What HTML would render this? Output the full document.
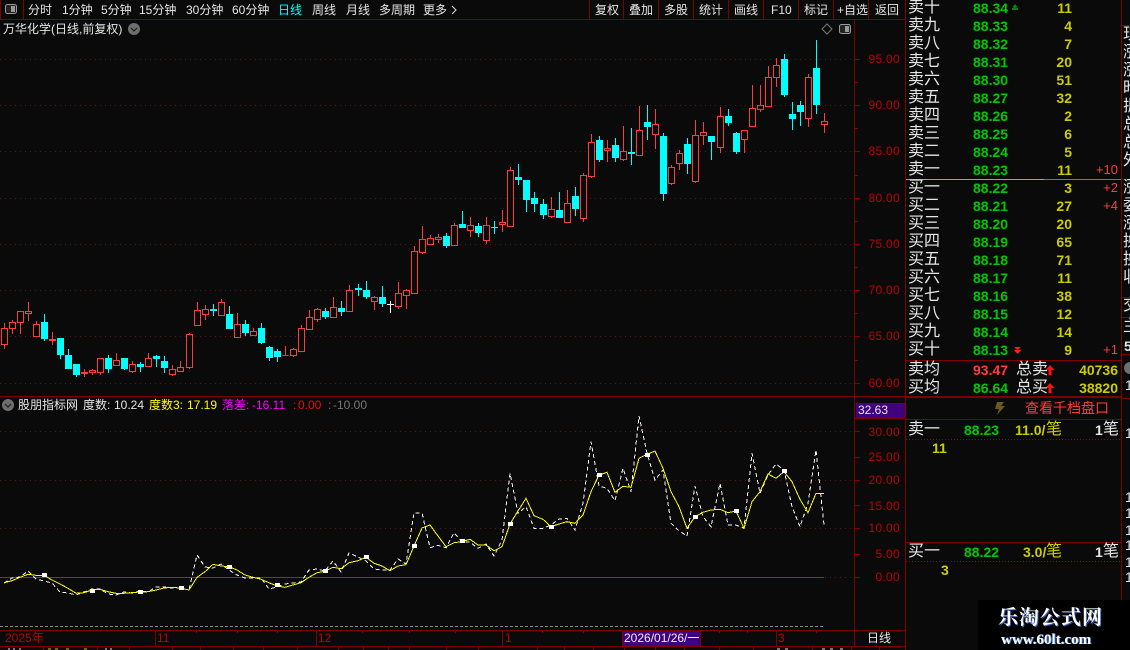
<!DOCTYPE html>
<html lang="zh"><head><meta charset="utf-8"><title>万华化学</title>
<style>
html,body{margin:0;padding:0;background:#0a0a0a}
#p{position:relative;width:1130px;height:650px;overflow:hidden;background:#0a0a0a;font:12px/16px "WenQuanYi Zen Hei","Liberation Sans","Noto Sans CJK SC",sans-serif;color:#e6e6e6}
svg{position:absolute;left:0;top:0}
#p span{position:absolute;white-space:nowrap}
.n{font-family:"Liberation Sans","WenQuanYi Zen Hei",sans-serif}
.l{font-size:16px;color:#e6e6e6;left:908px}
.g{color:#00c800;font:bold 14px/16px "Liberation Sans",sans-serif;left:973px}
.y{color:#cccc00;font:bold 14px/16px "Liberation Sans",sans-serif}
.q{color:#cccc00;font:bold 14px/16px "Liberation Sans",sans-serif;right:58px}
.r{color:#ff3c3c;font:13px/16px "Liberation Sans",sans-serif;right:12px}
.a{color:#c00000;font:12px/16px "Liberation Sans",sans-serif;right:230px;letter-spacing:.3px}
.t{color:#c00000;font:12px/16px "Liberation Sans","WenQuanYi Zen Hei",sans-serif;top:630px}
.e{left:1123px;font-size:16px}
.o{left:1125px;font:14px/16px "Liberation Sans",sans-serif;color:#e6e6e6}
</style></head><body><div id="p">
<svg width="1130" height="650" viewBox="0 0 1130 650">
<g fill="none" stroke="#5a1212" stroke-dasharray="1 4">
<path d="M0 59.5H854M0 105.5H854M0 151.5H854M0 198.5H854M0 244.5H854M0 290.5H854M0 336.5H854M0 383.5H854M0 431.5H854M0 480.5H854M0 528.5H854M825 577.5H854"/>
</g>
<g shape-rendering="crispEdges" stroke="#800000" fill="none">
<path d="M0 19.5H905M23.5 0V19M589.5 0V19M623.5 0V19M658.5 0V19M693.5 0V19M728.5 0V19M763.5 0V19M798.5 0V19M833.5 0V19M868.5 0V19M0.5 0V19"/>
<path d="M854.5 19V646M905.5 0V650M1121.5 0V600M0 396.5H1121M0 630.5H905M0 646.5H905M855 418.5H905M906 360.5H1121M906 397.5H1121M906 419.5H1121M906 542.5H1121M1122 25.5H1130M1122 179.5H1130M1122 297.5H1130M1122 317.5H1130M1122 354.5H1130M1122 398.5H1130"/>
<path d="M855 59.5h5M855 105.5h5M855 151.5h5M855 198.5h5M855 244.5h5M855 290.5h5M855 336.5h5M855 383.5h5M855 82.5h3M855 128.5h3M855 175.5h3M855 221.5h3M855 267.5h3M855 313.5h3M855 360.5h3M855 431.5h5M855 457.5h5M855 480.5h5M855 505.5h5M855 528.5h5M855 554.5h5M855 577.5h5"/>
<path d="M155.5 630V646M316.5 630V646M502.5 630V646M776.5 630V646M196.5 631v2M237.5 631v2M277.5 631v2M362.5 631v2M409.5 631v2M455.5 631v2M542.5 631v2M583.5 631v2M662.5 631v2M719.5 631v2M747.5 631v2M816.5 631v2M43.5 647v3M97.5 647v3M129.5 647v3M172.5 647v3M200.5 647v3M233.5 647v3M263.5 647v3M297.5 647v3M338.5 647v3M363.5 647v3M388.5 647v3M409.5 647v3M446.5 647v3M478.5 647v3M537.5 647v3M564.5 647v3M593.5 647v3M624.5 647v3M655.5 647v3M684.5 647v3M719.5 647v3M753.5 647v3M812.5 647v3M851.5 647v3M879.5 647v3"/>
</g>
<path shape-rendering="crispEdges" stroke="#e6e6e6" d="M8 649h2M13 649h2M19 649h2M105 649h2M110 649h2M777 649h3M785 649h3M822 649h3M830 649h3M840 649h3" fill="none"/>
<path shape-rendering="crispEdges" stroke="#cccc00" d="M48 649h3M55 649h3M66 649h3M84 649h3" fill="none"/>
<g shape-rendering="crispEdges">
<path fill="none" stroke="#ff3c3c" d="M4.5 323V349M12.5 320V334M20.5 311V334M28.5 302V321M36.5 321V337M52.5 332V345M84.5 369V377M92.5 369V375M100.5 358V375M116.5 353V366M132.5 361V373M148.5 353V366M172.5 365V376M180.5 361V372M189.5 333V369M197.5 302V326M205.5 305V320M221.5 299V315M237.5 313V337M253.5 328V336M285.5 346V356M293.5 348V357M301.5 325V352M309.5 310V329M317.5 308V322M333.5 297V317M349.5 285V311M374.5 296V310M398.5 282V309M406.5 289V309M414.5 246V293M422.5 226V254M430.5 235V244M438.5 234V243M454.5 223V245M470.5 217V237M486.5 217V244M502.5 210V232M510.5 167V226M551.5 197V218M567.5 190V222M583.5 173V222M591.5 134V178M607.5 140V162M623.5 126V161M639.5 106V155M655.5 109V149M671.5 165V185M679.5 150V170M695.5 120V183M703.5 122V145M720.5 107V153M744.5 130V153M752.5 85V126M760.5 85V112M768.5 66V106M776.5 58V87M808.5 74V127M824.5 113V133"/>
<path fill="#0a0a0a" stroke="#ff3c3c" d="M1.5 328.5h6v16h-6zM9.5 322.5h6v6h-6zM17.5 311.5h6v11h-6zM25.5 311.5h6v2h-6zM33.5 324.5h6v12h-6zM49.5 339.5h6v1h-6zM81.5 372.5h6v1h-6zM89.5 370.5h6v2h-6zM97.5 358.5h6v14h-6zM113.5 360.5h6v5h-6zM129.5 364.5h6v7h-6zM145.5 358.5h6v8h-6zM169.5 369.5h6v5h-6zM177.5 367.5h6v4h-6zM186.5 334.5h6v33h-6zM194.5 310.5h6v15h-6zM202.5 309.5h6v5h-6zM218.5 302.5h6v13h-6zM234.5 324.5h6v13h-6zM250.5 331.5h6v4h-6zM282.5 355.5h6M290.5 349.5h6v6h-6zM298.5 328.5h6v23h-6zM306.5 317.5h6v12h-6zM314.5 309.5h6v10h-6zM330.5 307.5h6v10h-6zM346.5 290.5h6v21h-6zM371.5 297.5h6v4h-6zM395.5 293.5h6v13h-6zM403.5 290.5h6v5h-6zM411.5 251.5h6v42h-6zM419.5 239.5h6v13h-6zM427.5 238.5h6v6h-6zM435.5 237.5h6v2h-6zM451.5 225.5h6v20h-6zM467.5 225.5h6v5h-6zM483.5 225.5h6v15h-6zM499.5 222.5h6v2h-6zM507.5 170.5h6v56h-6zM548.5 209.5h6v7h-6zM564.5 203.5h6v19h-6zM580.5 175.5h6v43h-6zM588.5 142.5h6v34h-6zM604.5 148.5h6v2h-6zM620.5 151.5h6v8h-6zM636.5 130.5h6v25h-6zM652.5 124.5h6v10h-6zM668.5 167.5h6v16h-6zM676.5 153.5h6v10h-6zM692.5 135.5h6v46h-6zM700.5 132.5h6v3h-6zM717.5 116.5h6v31h-6zM741.5 130.5h6v9h-6zM749.5 108.5h6v18h-6zM757.5 105.5h6v4h-6zM765.5 77.5h6v29h-6zM773.5 65.5h6v12h-6zM805.5 77.5h6v41h-6zM821.5 121.5h6v3h-6z"/>
<path fill="none" stroke="#00ffff" d="M44.5 314V341M60.5 338V359M68.5 349V369M76.5 364V377M108.5 355V373M124.5 358V370M140.5 362V372M156.5 355V367M164.5 356V373M213.5 304V316M229.5 306V329M245.5 320V336M261.5 323V344M269.5 346V361M277.5 349V362M325.5 308V319M341.5 301V316M358.5 284V296M366.5 281V299M382.5 286V307M446.5 233V248M462.5 211V228M478.5 223V237M494.5 221V234M518.5 164V185M526.5 180V212M534.5 192V212M543.5 199V219M559.5 192V218M575.5 187V216M599.5 136V162M615.5 138V162M631.5 128V165M647.5 105V140M663.5 133V201M687.5 138V174M711.5 136V160M728.5 109V126M736.5 132V154M784.5 54V97M792.5 102V130M800.5 101V126M816.5 40V114"/>
<path fill="#00ffff" d="M41 322h7v17h-7zM57 338h7v17h-7zM65 355h7v14h-7zM73 364h7v11h-7zM105 358h7v11h-7zM121 358h7v11h-7zM137 364h7v3h-7zM153 356h7v3h-7zM161 361h7v7h-7zM210 309h7v2h-7zM226 314h7v15h-7zM242 324h7v9h-7zM258 328h7v15h-7zM266 347h7v11h-7zM274 351h7v6h-7zM322 311h7v6h-7zM338 308h7v4h-7zM355 288h7v2h-7zM363 290h7v7h-7zM379 297h7v7h-7zM443 236h7v10h-7zM459 224h7v4h-7zM475 226h7v7h-7zM491 227h7v1h-7zM515 177h7v3h-7zM523 180h7v20h-7zM531 198h7v6h-7zM540 204h7v11h-7zM556 210h7v8h-7zM572 196h7v13h-7zM596 140h7v20h-7zM612 145h7v13h-7zM628 152h7v2h-7zM644 122h7v5h-7zM660 136h7v58h-7zM684 144h7v20h-7zM708 136h7v6h-7zM725 116h7v7h-7zM733 133h7v19h-7zM781 59h7v36h-7zM789 114h7v5h-7zM797 105h7v7h-7zM813 68h7v37h-7z"/>
<path fill="none" stroke="#fff" d="M390.5 301V313M387 304.5h7"/>
<path fill="none" stroke="#c81414" d="M0 577.5H824"/>
<path fill="none" stroke="#888" stroke-dasharray="3 2" d="M0 626.5H824"/>
<polyline fill="none" stroke="#fff" stroke-dasharray="4 3" points="4,583 12,578 20,577 28,571 36,579 44,581 52,583 60,592 68,593 76,595 84,592 92,589 100,589 108,594 116,595 124,592 132,593 140,591 148,592 156,587 164,587 172,588 180,588 189,590 197,555 205,567 213,568 221,564 229,570 237,575 245,578 253,578 261,578 269,589 277,587 285,584 293,583 301,582 309,570 317,569 325,571 333,561 341,572 349,553 358,557 366,561 374,569 382,570 390,570 398,559 406,564 414,513 422,513 430,547.7 438,545.3 446,547.7 454,532.7 462,541.7 470,542.3 478,548.3 486,544 494,556 502,540 510,473.3 518,513.3 526,506.7 534,528.3 543,528.3 551,525 559,519 567,518.3 575,530 583,503.3 591,441.7 599,486 607,488.3 615,500.7 623,468.3 631,491.7 639,416 647,453.3 655,480 663,470 671,523.3 679,530.7 687,536 695,486 703,516.7 711,526.7 720,483.3 728,525 736,525 744,528.3 752,453.3 760,493.3 768,475 776,464 784,470 792,506.7 800,526.7 808,503.3 816,450 824,525"/>
<polyline fill="none" stroke="#ffff00" points="4,582.7 12,580.7 20,577.3 28,574.3 36,575.3 44,575.3 52,580 60,584 68,588.3 76,593.3 84,592.7 92,590 100,589.3 108,591.7 116,593.3 124,593.3 132,592.7 140,592 148,591.7 156,590 164,588 172,587.3 180,588 189,590 197,577.3 205,571.7 213,564.3 221,566 229,566.7 237,570 245,575 253,577.3 261,579.3 269,582.7 277,586 285,587.3 293,585 301,582.7 309,577.3 317,572.7 325,571.3 333,567.3 341,568.7 349,562.7 358,560.7 366,557.3 374,563.3 382,566 390,570.7 398,566 406,564.7 414,546 422,528 430,525 438,536 446,546.7 454,542.7 462,541.7 470,539.3 478,545 486,545 494,550.7 502,546.7 510,524 518,511 526,498.3 534,515.7 543,519.3 551,526.7 559,524 567,521.7 575,523.3 583,515 591,491.7 599,475 607,472.3 615,492.3 623,486.3 631,487.3 639,458.3 647,454.3 655,451 663,468.3 671,491.7 679,506.7 687,528.3 695,516.7 703,512.3 711,510 720,509.3 728,512.7 736,511 744,528.3 752,501.7 760,491.7 768,474 776,478.3 784,471.7 792,481.7 800,499.3 808,512.7 816,493.3 824,493.7"/>
<path fill="#fff" d="M42 573h5v4h-5zM90 589h5v4h-5zM138 590h5v4h-5zM179 586h5v4h-5zM227 565h5v4h-5zM275 583h5v4h-5zM323 569h5v4h-5zM364 555h5v4h-5zM412 544h5v4h-5zM460 539h5v4h-5zM508 522h5v4h-5zM549 525h5v4h-5zM597 473h5v4h-5zM645 453h5v4h-5zM693 515h5v4h-5zM734 509h5v4h-5zM782 469h5v4h-5z"/>
<path fill="#400080" d="M856 403h49v15h-49zM623 631h77v15h-77z"/>
<path fill="none" stroke="#800000" d="M855.5 403.5h49M622.5 631V646M700.5 631V646"/>
<path fill="none" stroke="#c8a040" d="M906 179.5H1044"/>
<path fill="none" stroke="#4080c0" d="M1044 179.5H1121"/>
<path fill="none" stroke="#7a1414" stroke-dasharray="1 2" d="M906 439.5H1120M906 561.5H1120"/>
<path fill="#000" d="M978 600h152v50H978z"/>
</g>
<rect x="5.5" y="4.5" width="11" height="9" rx="2" fill="#222" stroke="#999"/><rect x="11" y="6" width="4" height="6" fill="#999"/>
<rect x="839.5" y="24.5" width="11" height="9" rx="2" fill="#222" stroke="#999"/><rect x="845" y="26" width="4" height="6" fill="#999"/>
<path d="M827 24l5 5-5 5-5-5z" fill="none" stroke="#777"/>
<circle cx="134" cy="29" r="6" fill="#6e6e6e"/><path d="M131 28l3 3 3-3" fill="none" stroke="#1a1a1a" stroke-width="1.2"/>
<circle cx="8" cy="405" r="6" fill="#6e6e6e"/><path d="M5 404l3 3 3-3" fill="none" stroke="#1a1a1a" stroke-width="1.2"/>
<path d="M452 6l4 4-4 4" fill="none" stroke="#ddd"/>
<path d="M997 402h7l-3 4h4l-8 9 2-6h-4z" fill="#6b5a20"/>
<path d="M1050 365l4.500 5h-3v5h-3v-5h-3zM1050 383l4.500 5h-3v5h-3v-5h-3z" fill="#ff1010"/>
<path d="M1015 4l2.500 3h-5zM1013.500 6h3v2h-3zM1012 8h6v2h-6z" fill="#0a800a"/>
<path d="M1014 347h7l-3.500 3zM1014 350h7l-3.500 4z" fill="#ff2020"/>
</svg>

<span style="left:28px;top:2px">分时</span><span style="left:62px;top:2px">1分钟</span><span style="left:101px;top:2px">5分钟</span><span style="left:139px;top:2px">15分钟</span><span style="left:186px;top:2px">30分钟</span><span style="left:232px;top:2px">60分钟</span><span style="left:278px;top:2px;color:#0ff">日线</span><span style="left:312px;top:2px">周线</span><span style="left:346px;top:2px">月线</span><span style="left:379px;top:2px">多周期</span><span style="left:423px;top:2px">更多</span>
<span style="left:595px;top:2px">复权</span><span style="left:629px;top:2px">叠加</span><span style="left:664px;top:2px">多股</span><span style="left:699px;top:2px">统计</span><span style="left:734px;top:2px">画线</span><span style="left:771px;top:2px" class="n">F10</span><span style="left:804px;top:2px">标记</span><span style="left:837px;top:2px">+自选</span><span style="left:875px;top:2px">返回</span>
<span style="left:3px;top:21px">万华化学(日线,前复权)</span>

<span style="left:18px;top:397px">股朋指标网</span><span style="left:83px;top:397px">度数:</span><span style="left:114px;top:397px" class="n">10.24</span>
<span style="left:149px;top:397px;color:#ff0">度数3:</span><span style="left:187px;top:397px;color:#ff0" class="n">17.19</span>
<span style="left:222px;top:397px;color:#f0f">落差:</span><span style="left:252px;top:397px;color:#f0f" class="n">-16.11</span>
<span style="left:293px;top:397px;color:#e01010" class="n">:</span><span style="left:298px;top:397px;color:#e01010" class="n">0.00</span>
<span style="left:328px;top:397px;color:#777" class="n">:</span><span style="left:333px;top:397px;color:#777" class="n">-10.00</span>

<span class="a" style="top:51px">95.00</span><span class="a" style="top:97px">90.00</span><span class="a" style="top:143px">85.00</span><span class="a" style="top:190px">80.00</span><span class="a" style="top:236px">75.00</span><span class="a" style="top:282px">70.00</span><span class="a" style="top:328px">65.00</span><span class="a" style="top:375px">60.00</span>
<span class="n" style="left:858px;top:402px;font-size:12px;color:#e6e6e6">32.63</span>
<span class="a" style="top:424px">30.00</span><span class="a" style="top:449px">25.00</span><span class="a" style="top:472px">20.00</span><span class="a" style="top:498px">15.00</span><span class="a" style="top:520px">10.00</span><span class="a" style="top:546px">5.00</span><span class="a" style="top:569px">0.00</span>

<span class="t" style="left:5px">2025年</span><span class="t" style="left:157px">11</span><span class="t" style="left:318px">12</span><span class="t" style="left:505px">1</span><span class="t" style="left:778px">3</span>
<span style="left:624px;top:630px;color:#eee;font-family:'Liberation Sans','WenQuanYi Zen Hei',sans-serif;font-size:12px">2026/01/26/一</span>
<span style="left:867px;top:630px">日线</span>

<span class="l" style="top:0">卖十</span><span class="g" style="top:0">88.34</span><span class="q" style="top:0">11</span>
<span class="l" style="top:18px">卖九</span><span class="g" style="top:18px">88.33</span><span class="q" style="top:18px">4</span>
<span class="l" style="top:36px">卖八</span><span class="g" style="top:36px">88.32</span><span class="q" style="top:36px">7</span>
<span class="l" style="top:54px">卖七</span><span class="g" style="top:54px">88.31</span><span class="q" style="top:54px">20</span>
<span class="l" style="top:72px">卖六</span><span class="g" style="top:72px">88.30</span><span class="q" style="top:72px">51</span>
<span class="l" style="top:90px">卖五</span><span class="g" style="top:90px">88.27</span><span class="q" style="top:90px">32</span>
<span class="l" style="top:108px">卖四</span><span class="g" style="top:108px">88.26</span><span class="q" style="top:108px">2</span>
<span class="l" style="top:126px">卖三</span><span class="g" style="top:126px">88.25</span><span class="q" style="top:126px">6</span>
<span class="l" style="top:144px">卖二</span><span class="g" style="top:144px">88.24</span><span class="q" style="top:144px">5</span>
<span class="l" style="top:162px">卖一</span><span class="g" style="top:162px">88.23</span><span class="q" style="top:162px">11</span><span class="r" style="top:162px">+10</span>
<span class="l" style="top:180px">买一</span><span class="g" style="top:180px">88.22</span><span class="q" style="top:180px">3</span><span class="r" style="top:180px">+2</span>
<span class="l" style="top:198px">买二</span><span class="g" style="top:198px">88.21</span><span class="q" style="top:198px">27</span><span class="r" style="top:198px">+4</span>
<span class="l" style="top:216px">买三</span><span class="g" style="top:216px">88.20</span><span class="q" style="top:216px">20</span>
<span class="l" style="top:234px">买四</span><span class="g" style="top:234px">88.19</span><span class="q" style="top:234px">65</span>
<span class="l" style="top:252px">买五</span><span class="g" style="top:252px">88.18</span><span class="q" style="top:252px">71</span>
<span class="l" style="top:270px">买六</span><span class="g" style="top:270px">88.17</span><span class="q" style="top:270px">11</span>
<span class="l" style="top:288px">买七</span><span class="g" style="top:288px">88.16</span><span class="q" style="top:288px">38</span>
<span class="l" style="top:306px">买八</span><span class="g" style="top:306px">88.15</span><span class="q" style="top:306px">12</span>
<span class="l" style="top:324px">买九</span><span class="g" style="top:324px">88.14</span><span class="q" style="top:324px">14</span>
<span class="l" style="top:342px">买十</span><span class="g" style="top:342px">88.13</span><span class="q" style="top:342px">9</span><span class="r" style="top:342px">+1</span>

<span class="l" style="top:362px">卖均</span><span class="g" style="top:362px;color:#ff3c3c">93.47</span><span class="l" style="left:1016px;top:362px">总卖</span><span class="q" style="top:362px;right:12px">40736</span>
<span class="l" style="top:380px">买均</span><span class="g" style="top:380px">86.64</span><span class="l" style="left:1016px;top:380px">总买</span><span class="q" style="top:380px;right:12px">38820</span>
<span style="left:1025px;top:400px;font-size:14px;color:#ff3c3c">查看千档盘口</span>

<span class="l" style="top:422px">卖一</span><span class="g" style="left:964px;top:422px">88.23</span><span class="y" style="left:1015px;top:422px">11.0/</span><span style="left:1046px;top:422px;font-size:16px;color:#cccc00">笔</span><span class="n" style="left:1095px;top:422px;font:bold 14px/16px 'Liberation Sans',sans-serif">1</span><span style="left:1103px;top:422px;font-size:16px">笔</span>
<span class="y" style="left:932px;top:440px">11</span>
<span class="l" style="top:544px">买一</span><span class="g" style="left:964px;top:544px">88.22</span><span class="y" style="left:1023px;top:544px">3.0/</span><span style="left:1046px;top:544px;font-size:16px;color:#cccc00">笔</span><span class="n" style="left:1095px;top:544px;font:bold 14px/16px 'Liberation Sans',sans-serif">1</span><span style="left:1103px;top:544px;font-size:16px">笔</span>
<span class="y" style="left:941px;top:562px">3</span>

<span class="e" style="top:27px">现</span><span class="e" style="top:45px">涨</span><span class="e" style="top:63px">涨</span><span class="e" style="top:81px">昨</span><span class="e" style="top:99px">振</span><span class="e" style="top:117px">总</span><span class="e" style="top:135px">总</span><span class="e" style="top:153px">外</span>
<span class="e" style="top:180px">涨</span><span class="e" style="top:198px">委</span><span class="e" style="top:216px">涨</span><span class="e" style="top:234px">换</span><span class="e" style="top:252px">换</span><span class="e" style="top:270px">收</span>
<span class="e" style="top:298px">交</span><span class="e" style="top:319px">主</span><span class="n" style="left:1124px;top:338px;font:bold 14px/16px 'Liberation Sans',sans-serif">5</span>
<span style="left:1124px;top:362px;width:12px;height:12px;border-radius:6px;background:#6e6e6e"></span>
<span class="o" style="top:377px">1</span><span class="o" style="top:425px">1</span><span class="o" style="top:489px">1</span><span class="o" style="top:505px">1</span><span class="o" style="top:522px">1</span><span class="o" style="top:537px">1</span><span class="o" style="top:554px">1</span><span class="o" style="top:569px">1</span>

<span style="left:998px;top:606px;font:bold 20px/24px 'Liberation Serif','Noto Serif CJK SC',serif;letter-spacing:1px;color:#fff;text-shadow:1px 1px 0 #4060c0">乐淘公式网</span>
<span style="left:1001px;top:632px;font:bold 15px/16px 'Liberation Serif',serif;color:#fff;text-shadow:1px 0 0 #4080e0">www.60lt.com</span>
</div></body></html>
